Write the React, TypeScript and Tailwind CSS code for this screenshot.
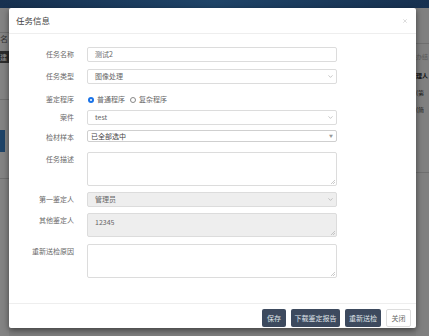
import { ChevronDown, X } from "lucide-react";

const font = { fontFamily: '"Noto Sans CJK SC", "Noto Sans", sans-serif' };

function Row({ label, children, className = "" }: { label: string; children: React.ReactNode; className?: string }) {
  return (
    <div className={`flex items-start ${className}`}>
      <div className="w-[65px] shrink-0 text-right text-[7px] leading-[15px] text-[#6a6a6a]">{label}</div>
      <div className="ml-[13px] w-[250px]">{children}</div>
    </div>
  );
}

function Select({ value, disabled = false }: { value: string; disabled?: boolean }) {
  return (
    <div
      className={`flex h-[15px] items-center justify-between rounded-[2px] border border-[#dcdcdc] pl-[7px] pr-[2px] text-[7px] text-[#666] ${disabled ? "bg-[#eeeeee]" : "bg-white"}`}
    >
      <span>{value}</span>
      <ChevronDown size={7} strokeWidth={1.6} className="text-[#888]" />
    </div>
  );
}

function Area({ value = "", h, disabled = false }: { value?: string; h: string; disabled?: boolean }) {
  return (
    <div
      className={`relative rounded-[2px] border border-[#dcdcdc] px-[7px] pt-[3px] text-[7px] text-[#666] ${h} ${disabled ? "bg-[#eeeeee]" : "bg-white"}`}
    >
      {value}
      <svg className="absolute bottom-[1px] right-[1px]" width="4" height="4" viewBox="0 0 4 4">
        <path d="M4 0L0 4M4 2L2 4" stroke="#aaa" strokeWidth="0.6" />
      </svg>
    </div>
  );
}

export default function App() {
  return (
    <div className="relative h-[336px] w-[429px] overflow-hidden bg-[#7d7d7d]" style={font}>
      {/* background page under the overlay */}
      <div className="h-[8px] bg-gradient-to-r from-[#173150] via-[#1f4468] to-[#173150]" />
      <div className="flex h-[328px] justify-between">
        <div className="w-[9px] bg-[#838383]">
          <div className="mt-[24px] border-t border-[#6f6f6f] text-[8px] leading-[12px] text-[#333]">名</div>
          <div className="mt-[6px] h-[12px] bg-[#2c2c2c] text-[7px] leading-[12px] text-[#999]">建</div>
          <div className="mt-[36px] border-t border-[#6f6f6f]" />
          <div className="mt-[30px] h-[22px] w-[5px] bg-[#1f4468]" />
          <div className="mt-[26px] border-t border-[#6f6f6f]" />
        </div>
        <div className="w-[13px] bg-[#808080] text-[6px] leading-[9px]">
          <div className="mt-[35px] border-t border-[#6f6f6f]" />
          <div className="mt-[8px] text-[#5a5a5a]">办结</div>
          <div className="mt-[10px] font-bold text-[#111]">理人</div>
          <div className="mt-[8px] text-[#222]">(第</div>
          <div className="mt-[8px] text-[#222]">(简</div>
          <div className="mt-[58px] border-t border-[#6f6f6f]" />
        </div>
      </div>

      {/* modal */}
      <div className="absolute left-[9px] top-[8px] flex h-[320px] w-[407px] flex-col rounded-[2px] bg-white shadow-[0_2px_6px_rgba(0,0,0,0.5)]">
        <div className="flex h-[26px] items-center justify-between border-b border-[#eeeeee] pl-[7px] pr-[8px]">
          <span className="text-[8.5px] text-[#444]">任务信息</span>
          <X size={6} strokeWidth={2} className="text-[#bbb]" />
        </div>

        <div className="flex flex-1 flex-col pt-[13px]">
          <Row label="任务名称">
            <div className="flex h-[15px] items-center rounded-[2px] border border-[#dcdcdc] pl-[7px] text-[7px] text-[#666]">测试2</div>
          </Row>
          <Row label="任务类型" className="mt-[7px]">
            <Select value="图像处理" />
          </Row>
          <Row label="鉴定程序" className="mt-[8px]">
            <div className="flex h-[15px] items-center text-[7px] text-[#666]">
              <span className="ml-[1px] mr-[3px] flex h-[6px] w-[6px] items-center justify-center rounded-full bg-[#1a73e8]">
                <span className="h-[2px] w-[2px] rounded-full bg-white" />
              </span>
              普通程序
              <span className="ml-[5px] mr-[3px] h-[6px] w-[6px] rounded-full border border-[#888]" />
              复杂程序
            </div>
          </Row>
          <Row label="案件" className="mt-[3px]">
            <Select value="test" />
          </Row>
          <Row label="检材样本" className="mt-[5px]">
            <div className="flex h-[12px] items-center justify-between rounded-[2px] border border-[#cfcfcf] pl-[3px] pr-[3px] text-[7px] text-[#444]">
              <span>已全部选中</span>
              <span className="text-[4px] text-[#999]">▼</span>
            </div>
          </Row>
          <Row label="任务描述" className="mt-[7px]">
            <Area h="h-[34px]" />
          </Row>
          <Row label="第一鉴定人" className="mt-[6px]">
            <Select value="管理员" disabled />
          </Row>
          <Row label="其他鉴定人" className="mt-[6px]">
            <Area value="12345" h="h-[24px]" disabled />
          </Row>
          <Row label="重新送检原因" className="mt-[7px]">
            <Area h="h-[34px]" />
          </Row>
        </div>

        <div className="flex h-[25px] items-start justify-end gap-[5px] border-t border-[#eeeeee] pr-[5px] pt-[5px] text-[7px]">
          <button className="h-[18px] w-[24px] rounded-[2px] bg-[#3d4a5e] text-[#dfe3e8]">保存</button>
          <button className="h-[18px] w-[49px] rounded-[2px] bg-[#3d4a5e] text-[#dfe3e8]">下载鉴定报告</button>
          <button className="h-[18px] w-[36px] rounded-[2px] bg-[#3d4a5e] text-[#dfe3e8]">重新送检</button>
          <button className="h-[18px] w-[25px] rounded-[2px] border border-[#dddddd] bg-white text-[#666]">关闭</button>
        </div>
      </div>
    </div>
  );
}
